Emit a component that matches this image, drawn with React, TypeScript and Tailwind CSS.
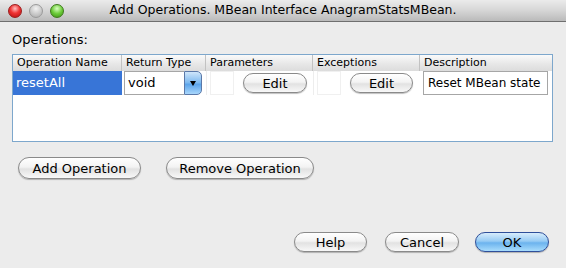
import React from "react";

const font = { fontFamily: '"Lucida Grande", "DejaVu Sans", "Liberation Sans", sans-serif' };

function AquaButton({ label, className = "", primary = false }: { label: string; className?: string; primary?: boolean }) {
  return (
    <button
      className={
        "flex shrink-0 items-center justify-center whitespace-nowrap rounded-full border text-[13px] leading-none text-black shadow-[0_1px_1px_rgba(0,0,0,0.25)] " +
        (primary
          ? "border-[#2f4f9a] bg-[linear-gradient(to_bottom,#d7ecfc_0%,#97cbf4_45%,#6cb3ee_55%,#a8dcfc_100%)] "
          : "border-[#8a8a8a] bg-[linear-gradient(to_bottom,#ffffff_0%,#f3f3f3_45%,#e2e2e2_55%,#f8f8f8_100%)] ") +
        className
      }
    >
      {label}
    </button>
  );
}

function HeaderCell({ label, last = false }: { label: string; last?: boolean }) {
  return (
    <div
      className={
        "flex h-[16px] items-center whitespace-nowrap bg-[linear-gradient(to_bottom,#fafafa,#e6e6e6_60%,#dcdcdc)] pl-[4px] text-[11px] text-black " +
        (last ? "" : "border-r border-[#c2c2c2]")
      }
    >
      {label}
    </div>
  );
}

export default function App() {
  return (
    <div className="flex h-[268px] w-[566px] flex-col overflow-hidden bg-[#ececec]" style={font}>
      {/* title bar */}
      <div className="grid h-[22px] grid-cols-[70px_1fr_70px] items-center border-b border-[#6f6f6f] bg-[linear-gradient(to_bottom,#ebebeb,#d6d6d6_50%,#bababa)]">
        <div className="flex items-center gap-[7px] pl-[8px]">
          <span className="h-[14px] w-[14px] rounded-full border border-[#9b1c1c] bg-[radial-gradient(circle_at_50%_30%,#ffc0c0_0%,#f03434_45%,#b30d0d_100%)]" />
          <span className="h-[14px] w-[14px] rounded-full border border-[#9a9a9a] bg-[radial-gradient(circle_at_50%_30%,#f2f2f2_0%,#c9c9c9_55%,#a9a9a9_100%)]" />
          <span className="h-[14px] w-[14px] rounded-full border border-[#3e7a1c] bg-[radial-gradient(circle_at_50%_30%,#d9ffc0_0%,#6ccc3a_50%,#3c8d14_100%)]" />
        </div>
        <div className="whitespace-nowrap text-center text-[12.5px] text-black">Add Operations. MBean Interface AnagramStatsMBean.</div>
        <div />
      </div>

      {/* body */}
      <div className="flex flex-1 flex-col px-[12px]">
        <div className="mt-[9px] h-[23px] text-[13px] leading-[18px] text-black">Operations:</div>

        <div className="flex h-[88px] w-[541px] flex-col border border-[#7da7cc] bg-white">
          <div className="grid grid-cols-[109px_84px_107px_107px_132px]">
            <HeaderCell label="Operation Name" />
            <HeaderCell label="Return Type" />
            <HeaderCell label="Parameters" />
            <HeaderCell label="Exceptions" />
            <HeaderCell label="Description" last />
          </div>
          <div className="grid h-[24px] grid-cols-[109px_84px_107px_107px_132px] overflow-hidden">
            <div className="flex h-[24px] items-center bg-[#3875d7] pl-[3px] text-[13px] text-white">resetAll</div>
            <div className="flex h-[24px] items-stretch pl-[2px]">
              <div className="flex w-[60px] items-center border border-r-0 border-[#a6a6a6] bg-white pl-[3px] text-[13px] text-black">
                void
              </div>
              <div className="flex w-[18px] items-center justify-center rounded-r-[5px] border border-[#5a78a8] bg-[linear-gradient(to_bottom,#cfe6fb,#7bb8ef_50%,#5aa3ea_55%,#a8d6fb)]">
                <span className="mt-[1px] h-0 w-0 border-l-[3px] border-r-[3px] border-t-[5px] border-l-transparent border-r-transparent border-t-black" />
              </div>
            </div>
            <div className="flex h-[24px] items-center gap-[9px] border-l border-[#ededed] pl-[3px]">
              <div className="h-[24px] w-[24px] shrink-0 border border-[#f0f0f0] bg-white" />
              <AquaButton label="Edit" className="h-[20px] w-[64px]" />
            </div>
            <div className="flex h-[24px] items-center gap-[9px] border-l border-[#ededed] pl-[3px]">
              <div className="h-[24px] w-[24px] shrink-0 border border-[#f0f0f0] bg-white" />
              <AquaButton label="Edit" className="h-[20px] w-[63px]" />
            </div>
            <div className="flex h-[24px] items-stretch pl-[3px] pr-[4px]">
              <div className="flex flex-1 items-center whitespace-nowrap border border-[#a6a6a6] bg-white pl-[4px] text-[12px] text-black">
                Reset MBean state
              </div>
            </div>
          </div>
        </div>

        <div className="mt-[15px] flex gap-[25px] pl-[6px]">
          <AquaButton label="Add Operation" className="h-[22px] w-[123px]" />
          <AquaButton label="Remove Operation" className="h-[22px] w-[148px]" />
        </div>

        <div className="mt-[53px] flex justify-end pr-[5px]">
          <AquaButton label="Help" className="h-[20px] w-[73px]" />
          <AquaButton label="Cancel" className="ml-[18px] h-[20px] w-[74px]" />
          <AquaButton label="OK" primary className="ml-[16px] h-[20px] w-[74px]" />
        </div>
      </div>
    </div>
  );
}
